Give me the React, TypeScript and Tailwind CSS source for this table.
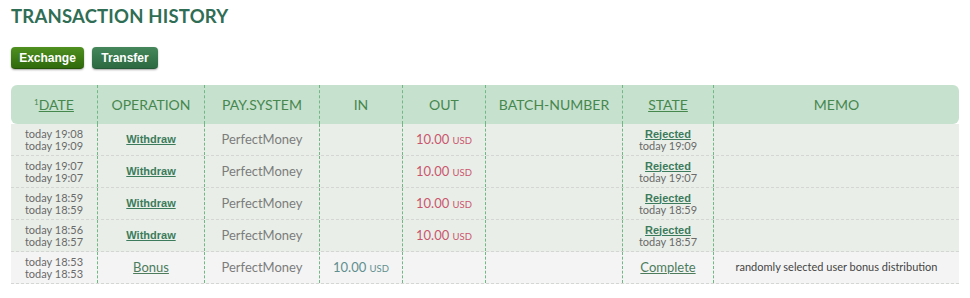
import React from "react";

type Row = {
  d1: string;
  d2: string;
  op: string;
  opBold: boolean;
  inAmt?: string;
  outAmt?: string;
  state: string;
  stateDate?: string;
  memo?: string;
  last?: boolean;
};

const rows: Row[] = [
  { d1: "today 19:08", d2: "today 19:09", op: "Withdraw", opBold: true, outAmt: "10.00", state: "Rejected", stateDate: "today 19:09" },
  { d1: "today 19:07", d2: "today 19:07", op: "Withdraw", opBold: true, outAmt: "10.00", state: "Rejected", stateDate: "today 19:07" },
  { d1: "today 18:59", d2: "today 18:59", op: "Withdraw", opBold: true, outAmt: "10.00", state: "Rejected", stateDate: "today 18:59" },
  { d1: "today 18:56", d2: "today 18:57", op: "Withdraw", opBold: true, outAmt: "10.00", state: "Rejected", stateDate: "today 18:57" },
  { d1: "today 18:53", d2: "today 18:53", op: "Bonus", opBold: false, inAmt: "10.00", state: "Complete", memo: "randomly selected user bonus distribution", last: true },
];

const cols = "grid grid-cols-[87px_107px_115px_83px_83px_137px_91px_1fr]";
const cell = "flex flex-col items-center justify-center border-r border-dashed border-[#72b887]";

function App() {
  return (
    <div className="w-[970px] h-[298px] bg-white pl-[11px] pr-[11px] pt-[4px] font-['Lato',sans-serif]">
      <h1 className="text-[18.5px] leading-[24px] font-bold text-[#2f6e55] tracking-[0.2px]">
        TRANSACTION HISTORY
      </h1>

      <div className="flex gap-[8px] mt-[19px]">
        <button className="h-[22px] w-[73px] rounded-[4px] bg-gradient-to-b from-[#4f9020] to-[#2f6a0c] border-b border-[#245208] shadow-[0_1px_2px_rgba(0,0,0,0.35)] text-white text-[12px] font-bold font-['Liberation_Sans',Arial,sans-serif]">
          Exchange
        </button>
        <button className="h-[22px] w-[66px] rounded-[4px] bg-gradient-to-b from-[#45875a] to-[#2c6a42] border-b border-[#245836] shadow-[0_1px_2px_rgba(0,0,0,0.35)] text-white text-[12px] font-bold font-['Liberation_Sans',Arial,sans-serif]">
          Transfer
        </button>
      </div>

      <div className="mt-[16px] w-[948px]">
        <div className={`${cols} h-[39px] bg-[#c6e1ce] rounded-[6px] text-[14px] text-[#46874e]`}>
          <div className={cell}>
            <span>
              <sup className="text-[8px] -top-[5px]">1</sup>
              <span className="underline">DATE</span>
            </span>
          </div>
          <div className={cell}>OPERATION</div>
          <div className={cell}>PAY.SYSTEM</div>
          <div className={cell}>IN</div>
          <div className={cell}>OUT</div>
          <div className={cell}>BATCH-NUMBER</div>
          <div className={cell}>
            <span className="underline">STATE</span>
          </div>
          <div className="flex items-center justify-center">MEMO</div>
        </div>

        {rows.map((r, i) => (
          <div
            key={i}
            className={`${cols} h-[32px] border-b border-dashed border-[#d4d6d4] ${r.last ? "bg-[#f4f4f4]" : "bg-[#e9efe8]"}`}
          >
            <div className={`${cell} text-[11px] leading-[12px] text-[#6a6a6a]`}>
              <span>{r.d1}</span>
              <span>{r.d2}</span>
            </div>
            <div className={cell}>
              {r.opBold ? (
                <span className="font-['Liberation_Sans',Arial,sans-serif] font-bold text-[11px] underline text-[#3c7b5c]">
                  {r.op}
                </span>
              ) : (
                <span className="text-[13px] underline text-[#4c7c5c]">{r.op}</span>
              )}
            </div>
            <div className={`${cell} text-[13px] text-[#7c7c7c]`}>PerfectMoney</div>
            <div className={`${cell} text-[13px] text-[#5f8f8f]`}>
              {r.inAmt && (
                <span>
                  {r.inAmt} <span className="text-[9.5px]">USD</span>
                </span>
              )}
            </div>
            <div className={`${cell} text-[13px] text-[#c9566e]`}>
              {r.outAmt && (
                <span>
                  {r.outAmt} <span className="text-[9.5px]">USD</span>
                </span>
              )}
            </div>
            <div className={cell}></div>
            <div className={cell}>
              {r.stateDate ? (
                <>
                  <span className="font-['Liberation_Sans',Arial,sans-serif] font-bold text-[11px] leading-[12px] underline text-[#3c7b5c]">
                    {r.state}
                  </span>
                  <span className="text-[11px] leading-[12px] text-[#6a6a6a]">{r.stateDate}</span>
                </>
              ) : (
                <span className="text-[13px] underline text-[#4c7c5c]">{r.state}</span>
              )}
            </div>
            <div className="flex items-center justify-center text-[11px] text-[#444]">{r.memo}</div>
          </div>
        ))}
      </div>
    </div>
  );
}

export default App;
